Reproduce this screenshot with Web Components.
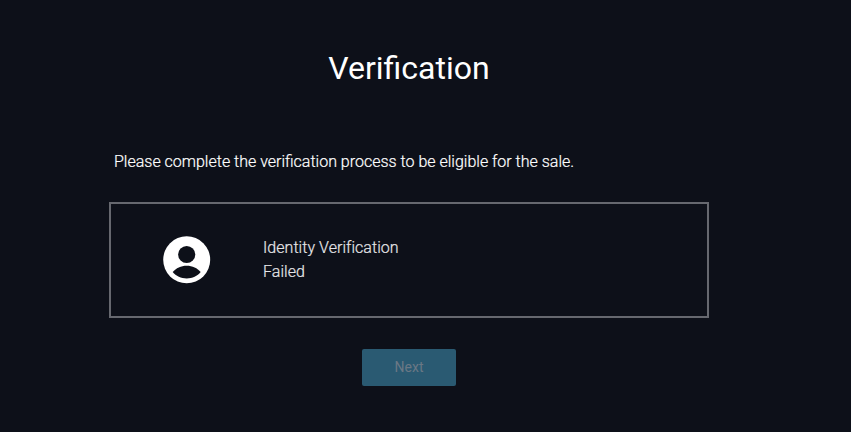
<!DOCTYPE html>
<html>
<head>
<meta charset="utf-8">
<title>Verification</title>
<style>
  html,body{margin:0;height:100%;background:#0d1019;}
  body{font-family:Roboto,"Liberation Sans",sans-serif;color:#fff;overflow:hidden;}
</style>
</head>
<body>
<verify-page>
  <span slot="title">Verification</span>
  <span slot="intro">Please complete the verification process to be eligible for the sale.</span>
  <verify-step name="Identity Verification" status="Failed"></verify-step>
  <next-button slot="action" disabled>Next</next-button>
</verify-page>

<script>
class VerifyPage extends HTMLElement {
  constructor() {
    super();
    this.attachShadow({ mode: 'open' }).innerHTML = /*html*/ `
    <style>
    :host{display:block;width:600px;margin-left:109px;padding-top:47px;}
    h1{margin:0;font-size:32px;line-height:43px;font-weight:400;text-align:center;color:#fff;}
    p{margin:60px 0 0 5px;font-size:16px;line-height:24px;font-weight:300;color:#fff;-webkit-text-stroke:.2px #fff;}
    .step{margin-top:28px;}
    .action{margin-top:31px;display:flex;justify-content:center;}
    </style>
    <h1><slot name="title"></slot></h1>
    <p><slot name="intro"></slot></p>
    <div class="step"><slot></slot></div>
    <div class="action"><slot name="action"></slot></div>
    `;
  }
}
customElements.define('verify-page', VerifyPage);

class VerifyStep extends HTMLElement {
  constructor() {
    super();
    this.attachShadow({ mode: 'open' }).innerHTML = /*html*/ `
    <style>
    :host{display:flex;align-items:center;box-sizing:border-box;height:116px;border:2px solid #66686f;padding-left:52px;}
    svg{display:block;width:48px;height:48px;flex:none;}
    .text{margin-left:52px;font-size:16px;line-height:24px;font-weight:300;letter-spacing:.05px;color:#e6e6e8;-webkit-text-stroke:.2px #e6e6e8;}
    </style>
    <svg viewBox="0 0 48 48">
      <circle cx="23.7" cy="23.8" r="23.5" fill="#fff"/>
      <circle cx="23.7" cy="18.5" r="8.6" fill="#0d1019"/>
      <path d="M9.7 36C13 32 18 29.7 23.7 29.7S34.4 32 37.7 36C34.4 40 29.4 42.4 23.7 42.4S13 40 9.7 36Z" fill="#0d1019"/>
    </svg>
    <div class="text"><div class="name"></div><div class="status"></div></div>
    `;
  }
  connectedCallback() {
    this.shadowRoot.querySelector('.name').textContent = this.getAttribute('name');
    this.shadowRoot.querySelector('.status').textContent = this.getAttribute('status');
  }
}
customElements.define('verify-step', VerifyStep);

class NextButton extends HTMLElement {
  constructor() {
    super();
    this.attachShadow({ mode: 'open' }).innerHTML = /*html*/ `
    <style>
    :host{display:flex;align-items:center;justify-content:center;box-sizing:border-box;width:94px;height:37px;padding-bottom:2px;border-radius:2px;background:#2a5a72;color:#6a7885;font-size:14px;}
    </style>
    <slot></slot>
    `;
  }
}
customElements.define('next-button', NextButton);
</script>
</body>
</html>
